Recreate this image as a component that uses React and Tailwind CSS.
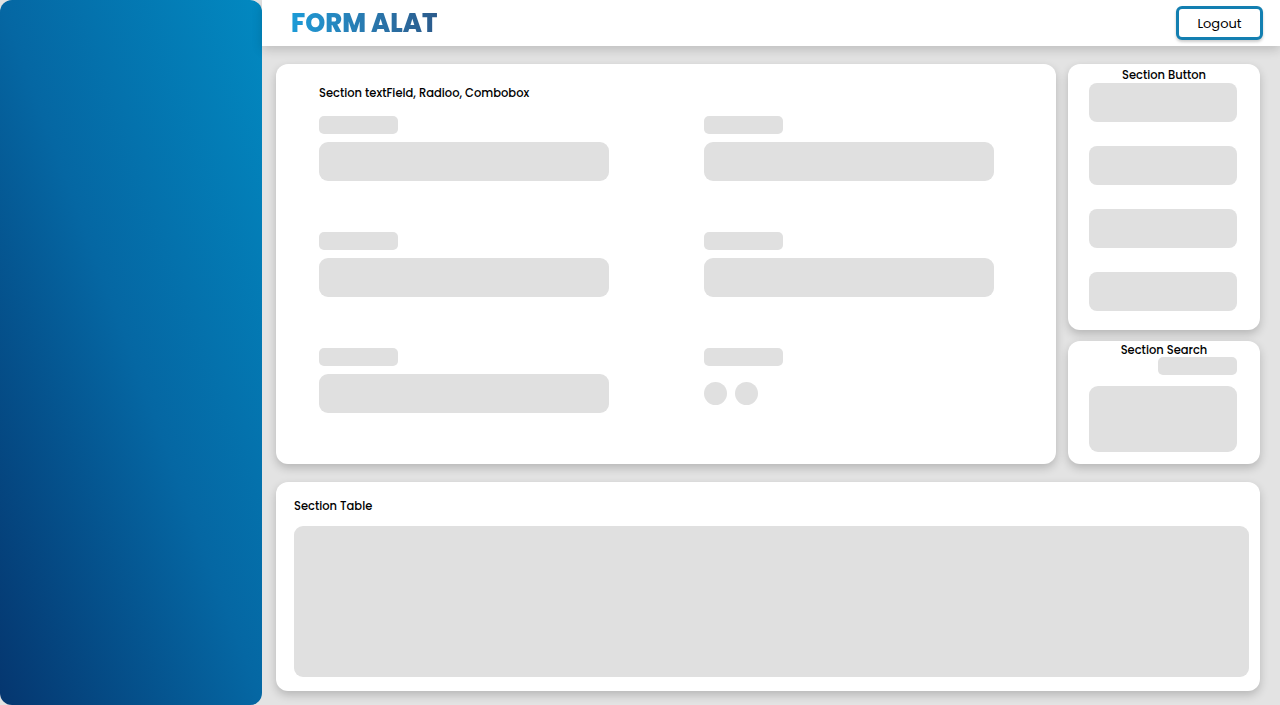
import React from "react";

const font = { fontFamily: "Poppins, Inter, 'Noto Sans', sans-serif" };

function Field({ radio }) {
  return (
    <div className="flex flex-col gap-2">
      <div className="h-[18px] w-[79px] rounded-[5px] bg-[#e0e0e0]" />
      {radio ? (
        <div className="mt-2 flex gap-2">
          <div className="h-[23px] w-[23px] rounded-full bg-[#e0e0e0]" />
          <div className="h-[23px] w-[23px] rounded-full bg-[#e0e0e0]" />
        </div>
      ) : (
        <div className="h-[39px] w-[290px] rounded-[9px] bg-[#e0e0e0]" />
      )}
    </div>
  );
}

export default function App() {
  return (
    <div className="flex h-[705px] w-[1280px] overflow-hidden bg-[#e3e3e3] text-black" style={font}>
      <aside className="h-full w-[262px] shrink-0 rounded-[12px] bg-linear-to-bl from-[#0289c1] via-[#0567a3] to-[#05366f]" />
      <div className="flex min-w-0 flex-1 flex-col">
        <header className="relative z-10 flex h-[46px] shrink-0 items-center justify-between bg-white pl-[29px] pr-[17px] shadow-[0_4px_10px_rgba(0,0,0,0.16)]">
          <h1 className="mt-[2px] bg-linear-to-r from-[#1b9bd7] to-[#2b5b8c] bg-clip-text text-[25.5px] font-extrabold leading-none text-transparent">
            FORM ALAT
          </h1>
          <button className="h-[34px] w-[87px] rounded-[6px] border-[3px] border-[#137fb1] bg-white text-[13px] leading-none shadow-[0_2px_3px_rgba(0,0,0,0.2)]">
            Logout
          </button>
        </header>
        <main className="flex flex-1 flex-col gap-[18px] pb-[14px] pl-[14px] pr-[20px] pt-[18px]">
          <div className="flex gap-[12px]">
            <section className="h-[400px] w-[780px] rounded-[12px] bg-white pl-[43px] pt-[21px] shadow-[0_4px_10px_rgba(0,0,0,0.2)]">
              <h2 className="text-[11.5px] font-medium leading-[16px]">Section textField, Radioo, Combobox</h2>
              <div className="mt-[15px] grid grid-cols-[290px_290px] gap-x-[95px] gap-y-[51px]">
                <Field />
                <Field />
                <Field />
                <Field />
                <Field />
                <Field radio />
              </div>
            </section>
            <div className="flex w-[192px] flex-col gap-[11px]">
              <section className="flex h-[266px] flex-col items-center rounded-[12px] bg-white pt-[3px] shadow-[0_4px_10px_rgba(0,0,0,0.2)]">
                <h2 className="text-[11.5px] font-medium leading-[16px]">Section Button</h2>
                <div className="ml-[-2px] flex flex-col gap-[24px]">
                  <div className="h-[39px] w-[148px] rounded-[8px] bg-[#e0e0e0]" />
                  <div className="h-[39px] w-[148px] rounded-[8px] bg-[#e0e0e0]" />
                  <div className="h-[39px] w-[148px] rounded-[8px] bg-[#e0e0e0]" />
                  <div className="h-[39px] w-[148px] rounded-[8px] bg-[#e0e0e0]" />
                </div>
              </section>
              <section className="flex h-[123px] flex-col items-center rounded-[12px] bg-white pt-[1px] shadow-[0_4px_10px_rgba(0,0,0,0.2)]">
                <h2 className="text-[11.5px] font-medium leading-[16px]">Section Search</h2>
                <div className="-mt-[1px] ml-[-2px] flex w-[148px] flex-col items-end gap-[11px]">
                  <div className="h-[18px] w-[79px] rounded-[5px] bg-[#e0e0e0]" />
                  <div className="h-[66px] w-[148px] rounded-[9px] bg-[#e0e0e0]" />
                </div>
              </section>
            </div>
          </div>
          <section className="flex h-[209px] flex-col rounded-[12px] bg-white pl-[18px] pr-[11px] pt-[16px] shadow-[0_4px_10px_rgba(0,0,0,0.2)]">
            <h2 className="text-[11.5px] font-medium leading-[16px]">Section Table</h2>
            <div className="mt-[12px] h-[151px] rounded-[9px] bg-[#e0e0e0]" />
          </section>
        </main>
      </div>
    </div>
  );
}
